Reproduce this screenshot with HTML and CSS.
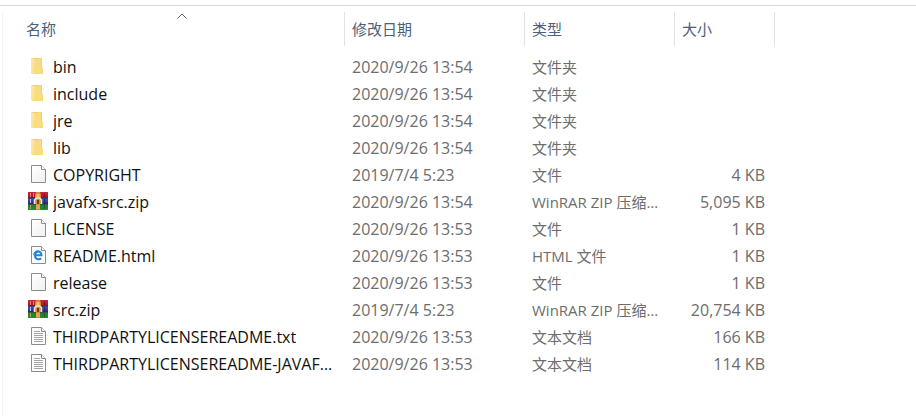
FILE: index.html
```
<!DOCTYPE html>
<html lang="zh-CN">
<head>
    <meta charset="UTF-8">
    <meta name="viewport" content="width=device-width, initial-scale=1.0">
    <title>文件列表</title>
    <link rel="stylesheet" href="styles.css">
</head>
<body>
    <svg class="sprite" aria-hidden="true">
        <defs>
            <linearGradient id="folderFront" x1="0" y1="0" x2="1" y2="1">
                <stop offset="0" stop-color="#fdeaa6"/>
                <stop offset="1" stop-color="#fadf8a"/>
            </linearGradient>
            <linearGradient id="paper" x1="0" y1="0" x2="1" y2="1">
                <stop offset="0" stop-color="#ffffff"/>
                <stop offset="1" stop-color="#f0f0f0"/>
            </linearGradient>
            <linearGradient id="bookRed" x1="0" y1="0" x2="0" y2="1">
                <stop offset="0" stop-color="#c8283c"/>
                <stop offset="1" stop-color="#a01430"/>
            </linearGradient>
            <linearGradient id="bookBlue" x1="0" y1="0" x2="0" y2="1">
                <stop offset="0" stop-color="#4452c0"/>
                <stop offset="1" stop-color="#2c2a80"/>
            </linearGradient>
            <linearGradient id="bookGreen" x1="0" y1="0" x2="0" y2="1">
                <stop offset="0" stop-color="#1f7a3c"/>
                <stop offset="1" stop-color="#2c8a30"/>
            </linearGradient>
        </defs>
        <symbol id="folder" viewBox="0 0 20 20">
            <path d="M3 2h11v9l1 1v6H4z" fill="#f3cf6a"/>
            <path d="M3 2l4 1.500V18H4l-1-1z" fill="url(#folderFront)"/>
            <path d="M7 3.500L13 2v9l2 1v5l-1 1H6z" fill="#f9dc80"/>
        </symbol>
        <symbol id="file" viewBox="0 0 20 20">
            <path d="M3.5 1.5h10l4 4v13h-14z" fill="url(#paper)" stroke="#8c8c8c"/>
            <path d="M13.5 1.5v4h4" fill="#ffffff" stroke="#8c8c8c"/>
        </symbol>
        <symbol id="text" viewBox="0 0 20 20">
            <path d="M3.5 1.5h10l4 4v13h-14z" fill="#fcfcfc" stroke="#8c8c8c"/>
            <path d="M13.5 1.5v4h4" fill="#ffffff" stroke="#8c8c8c"/>
            <path d="M6 5.5h6M6 7.5h9M6 9.5h9M6 11.5h9M6 13.5h9M6 15.5h9" stroke="#a4a4a4"/>
        </symbol>
        <symbol id="html" viewBox="0 0 20 20">
            <path d="M3.5 1.5h10l4 4v13h-14z" fill="#fcfcfc" stroke="#8c8c8c"/>
            <path d="M13.5 1.5v4h4" fill="#ffffff" stroke="#8c8c8c"/>
            <path d="M7 10.200h6.500c0-5-6.500-4.600-6.500.2 0 4 4 4.600 6.200 3" fill="none" stroke="#1f86d8" stroke-width="2"/>
            <path d="M5.600 10c.6-3 2.600-4.200 5-4.200" fill="none" stroke="#1f86d8" stroke-width="1.200"/>
        </symbol>
        <symbol id="zip" viewBox="0 0 20 20">
            <path d="M0 1h20v6H0z" fill="url(#bookRed)"/>
            <path d="M0 7h20v6H0z" fill="url(#bookBlue)"/>
            <path d="M0 13h20v6H0z" fill="url(#bookGreen)"/>
            <path d="M0 7h20M0 13h20" stroke="#1c1430" stroke-opacity=".5"/>
            <path d="M2.500 2v4M5.500 2v4M2.500 14v4" stroke="#e8a060" stroke-opacity=".8"/>
            <path d="M2.500 8v4" stroke="#b8c4e8"/>
            <path d="M16.500 14v4M16.500 8v4M16.500 2v4" stroke="#000000" stroke-opacity=".3"/>
            <path d="M8 1h4l1 3v3l1 2v4h-2v6H8v-6H6V9l1-2V4z" fill="#d88c30"/>
            <path d="M8.500 3h3v3h-3z" fill="#f4c060"/>
            <path d="M6.500 13V9l2-2h3l2 2v4" fill="none" stroke="#f6e8cc" stroke-width="1.500"/>
            <path d="M9 9h2v4H9z" fill="#5a4038"/>
            <path d="M8 15h4M8 17h4" stroke="#f0c060"/>
        </symbol>
    </svg>

    <main class="file-list">
        <div class="pane">
            <table class="files">
                <colgroup>
                    <col>
                    <col class="col-date">
                    <col class="col-type">
                    <col class="col-size">
                </colgroup>
                <thead>
                    <tr>
                        <th scope="col" aria-sort="ascending">
                            <button type="button" class="sort-btn">名称
                                <svg class="caret" viewBox="0 0 10 6" aria-hidden="true"><path d="M.5 5.500L5 1l4.500 4.500" fill="none" stroke="#606060"/></svg>
                            </button>
                        </th>
                        <th scope="col"><button type="button" class="sort-btn">修改日期</button></th>
                        <th scope="col"><button type="button" class="sort-btn">类型</button></th>
                        <th scope="col"><button type="button" class="sort-btn">大小</button></th>
                    </tr>
                </thead>
                <tbody>
                    <tr>
                        <td><div class="name"><svg class="icon"><use href="#folder"/></svg><span>bin</span></div></td>
                        <td class="date">2020/9/26 13:54</td>
                        <td>文件夹</td>
                        <td class="size"></td>
                    </tr>
                    <tr>
                        <td><div class="name"><svg class="icon"><use href="#folder"/></svg><span>include</span></div></td>
                        <td class="date">2020/9/26 13:54</td>
                        <td>文件夹</td>
                        <td class="size"></td>
                    </tr>
                    <tr>
                        <td><div class="name"><svg class="icon"><use href="#folder"/></svg><span>jre</span></div></td>
                        <td class="date">2020/9/26 13:54</td>
                        <td>文件夹</td>
                        <td class="size"></td>
                    </tr>
                    <tr>
                        <td><div class="name"><svg class="icon"><use href="#folder"/></svg><span>lib</span></div></td>
                        <td class="date">2020/9/26 13:54</td>
                        <td>文件夹</td>
                        <td class="size"></td>
                    </tr>
                    <tr>
                        <td><div class="name"><svg class="icon"><use href="#file"/></svg><span>COPYRIGHT</span></div></td>
                        <td class="date">2019/7/4 5:23</td>
                        <td>文件</td>
                        <td class="size">4 KB</td>
                    </tr>
                    <tr>
                        <td><div class="name"><svg class="icon"><use href="#zip"/></svg><span>javafx-src.zip</span></div></td>
                        <td class="date">2020/9/26 13:54</td>
                        <td>WinRAR ZIP 压缩文件</td>
                        <td class="size">5,095 KB</td>
                    </tr>
                    <tr>
                        <td><div class="name"><svg class="icon"><use href="#file"/></svg><span>LICENSE</span></div></td>
                        <td class="date">2020/9/26 13:53</td>
                        <td>文件</td>
                        <td class="size">1 KB</td>
                    </tr>
                    <tr>
                        <td><div class="name"><svg class="icon"><use href="#html"/></svg><span>README.html</span></div></td>
                        <td class="date">2020/9/26 13:53</td>
                        <td>HTML 文件</td>
                        <td class="size">1 KB</td>
                    </tr>
                    <tr>
                        <td><div class="name"><svg class="icon"><use href="#file"/></svg><span>release</span></div></td>
                        <td class="date">2020/9/26 13:53</td>
                        <td>文件</td>
                        <td class="size">1 KB</td>
                    </tr>
                    <tr>
                        <td><div class="name"><svg class="icon"><use href="#zip"/></svg><span>src.zip</span></div></td>
                        <td class="date">2019/7/4 5:23</td>
                        <td>WinRAR ZIP 压缩文件</td>
                        <td class="size">20,754 KB</td>
                    </tr>
                    <tr>
                        <td><div class="name"><svg class="icon"><use href="#text"/></svg><span>THIRDPARTYLICENSEREADME.txt</span></div></td>
                        <td class="date">2020/9/26 13:53</td>
                        <td>文本文档</td>
                        <td class="size">166 KB</td>
                    </tr>
                    <tr>
                        <td><div class="name"><svg class="icon"><use href="#text"/></svg><span>THIRDPARTYLICENSEREADME-JAVAFX.txt</span></div></td>
                        <td class="date">2020/9/26 13:53</td>
                        <td>文本文档</td>
                        <td class="size">114 KB</td>
                    </tr>
                </tbody>
            </table>
        </div>
    </main>
</body>
</html>
```
FILE: styles.css
```
* {
    margin: 0;
    padding: 0;
    box-sizing: border-box;
}

body {
    background: #fff;
    font-family: 'Open Sans', 'Noto Sans CJK SC', sans-serif;
    font-size: 15px;
    color: #6d6d6d;
    padding-top: 5px;
}

.sprite {
    position: absolute;
    width: 0;
    height: 0;
}

.file-list {
    display: flex;
    min-height: calc(100vh - 5px);
    border-top: 1px solid #d9d9d9;
    padding: 6px 0 0 2px;
}

.pane {
    flex: 1;
    min-width: 0;
    border-left: 1px solid #f4f4f4;
    padding: 0 141px 0 16px;
}

.files {
    width: 100%;
    table-layout: fixed;
    border-collapse: collapse;
}

.col-date {
    width: 180px;
}

.col-type {
    width: 150px;
}

.col-size {
    width: 100px;
}

.files th {
    padding-bottom: 8px;
    font-weight: normal;
}

.sort-btn {
    display: block;
    position: relative;
    width: 100%;
    height: 34px;
    padding: 0 0 2px 7px;
    background: none;
    border: none;
    border-right: 1px solid #e2e2e2;
    font: inherit;
    color: #4c607a;
    text-align: left;
    cursor: pointer;
}

.sort-btn:hover {
    background-color: #d9ebf9;
}

.caret {
    position: absolute;
    top: 1px;
    left: 50%;
    width: 10px;
    height: 6px;
    margin-left: -5px;
}

.files td {
    height: 27px;
    padding: 0 10px 0 7px;
    line-height: 27px;
    white-space: nowrap;
    overflow: hidden;
    text-overflow: ellipsis;
}

.files tbody tr:hover {
    background-color: #e5f3ff;
}

.name,
.files .date,
.files .size {
    font-size: 16px;
}

.files .size {
    text-align: right;
}

.name {
    display: flex;
    gap: 5px;
    padding-left: 2px;
    color: #111;
}

.name span {
    overflow: hidden;
    text-overflow: ellipsis;
}

.icon {
    flex: none;
    width: 20px;
    height: 20px;
    margin-top: 2px;
}
```
